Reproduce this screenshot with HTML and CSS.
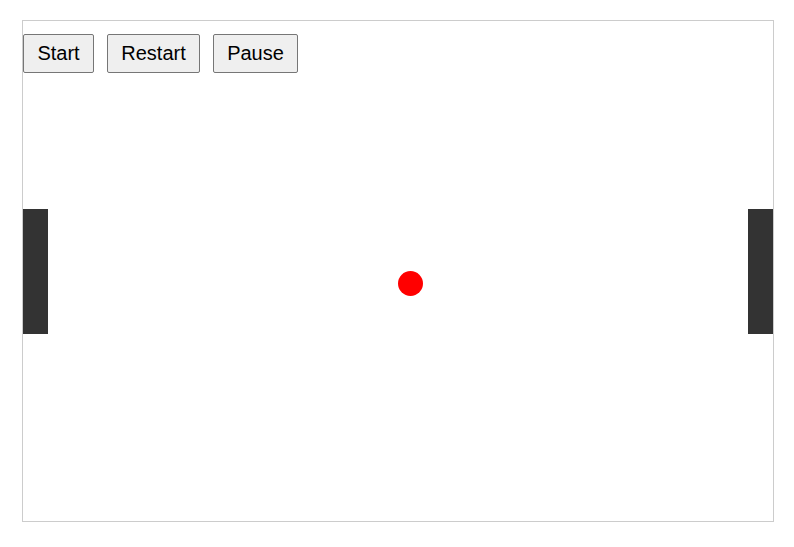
FILE: index.html
```html
<!DOCTYPE html>
<html>
<head>
<meta charset="utf-8">
<link rel="stylesheet" href="styles.css">
</head>
<body>
<div class="game">
  <div class="controls">
    <button class="btn btn-start">Start</button>
    <button class="btn btn-restart">Restart</button>
    <button class="btn btn-pause">Pause</button>
  </div>
  <div class="paddle paddle-left"></div>
  <div class="paddle paddle-right"></div>
  <div class="ball"></div>
</div>
</body>
</html>
```
FILE: styles.css
```css
html, body {
  margin: 0;
  padding: 0;
  background: #fff;
}
body {
  padding: 20px 0 0 22px;
  font-family: "Liberation Sans", Arial, sans-serif;
}
.game {
  position: relative;
  width: 750px;
  height: 500px;
  border: 1px solid #cccccc;
}
.controls {
  display: flex;
  gap: 13px;
  padding-top: 13px;
}
.btn {
  margin: 0;
  height: 39px;
  padding: 0;
  font-family: "Liberation Sans", Arial, sans-serif;
  font-size: 20px;
  color: #000;
  background: #efefef;
  border: 1px solid #767676;
  border-radius: 2px;
}
.btn-start { width: 71px; }
.btn-restart { width: 93px; }
.btn-pause { width: 85px; }
.paddle {
  position: absolute;
  top: 188px;
  width: 25px;
  height: 125px;
  background: #333333;
}
.paddle-left { left: 0; }
.paddle-right { right: 0; }
.ball {
  position: absolute;
  left: 375px;
  top: 250px;
  width: 25px;
  height: 25px;
  border-radius: 50%;
  background: #ff0000;
}
```
